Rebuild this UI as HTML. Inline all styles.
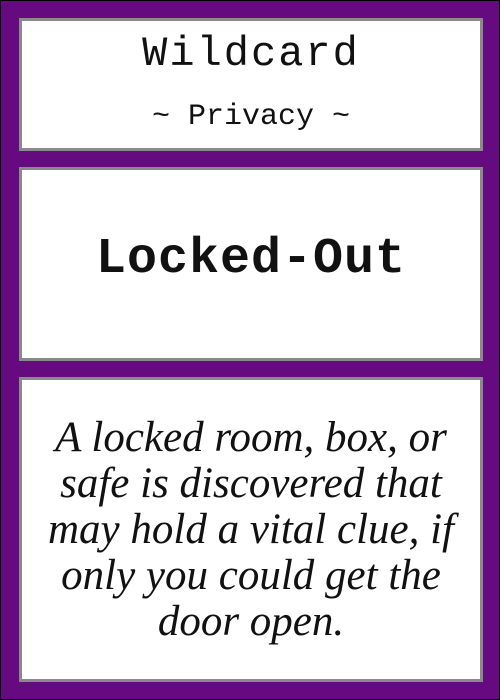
<!DOCTYPE html>
<html><head><style>
body{margin:0;width:500px;height:700px;overflow:hidden}
.c{position:absolute;left:0;top:0;width:498px;height:698px;border:1px solid #000;background:#660a80}
.b{position:absolute;left:18px;width:458px;background:#fff;border:3px solid #8a8a8a;text-align:center;color:#111}
.m{font-family:"Liberation Mono",monospace}
</style></head><body>
<div class="c">
<div class="b m" style="top:17px;height:127px">
<div style="font-size:42px;letter-spacing:2px;position:absolute;top:8px;width:100%;line-height:50px">Wildcard</div>
<div style="font-size:30px;position:absolute;top:76px;width:100%;line-height:40px">~ Privacy ~</div>
</div>
<div class="b m" style="top:166px;height:188px">
<div style="font-size:50px;font-weight:bold;letter-spacing:1px;position:absolute;top:60px;width:100%;line-height:60px">Locked-Out</div>
</div>
<div class="b" style="top:376px;height:299px">
<div style="font-family:'Liberation Serif',serif;font-style:italic;font-size:43px;line-height:46px;position:absolute;top:35px;left:18px;right:18px">A locked room, box, or safe is discovered that may hold a vital clue, if only you could get the door open.</div>
</div>
</div>
</body></html>
